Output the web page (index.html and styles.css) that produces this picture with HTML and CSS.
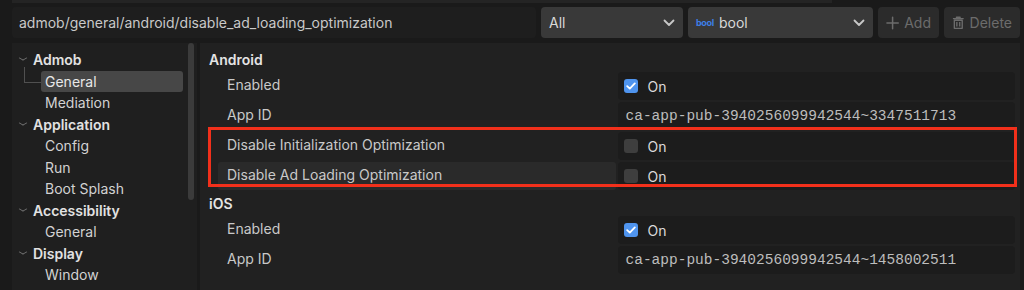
FILE: index.html
```html
<!DOCTYPE html>
<html lang="en">
<head>
    <meta charset="UTF-8">
    <title>Project Settings</title>
    <link rel="stylesheet" href="styles.css">
</head>
<body>
    <div class="top-edge"></div>
    <div class="window">
        <div class="toolbar">
            <div class="search">admob/general/android/disable_ad_loading_optimization</div>
            <div class="select select-all">
                <span class="select-text">All</span>
                <svg class="chevron" width="12" height="8" viewBox="0 0 12 8"><path d="M1.5 1.5 L6 6 L10.5 1.5" fill="none" stroke="#c8c8c8" stroke-width="1.8" stroke-linecap="round" stroke-linejoin="round"/></svg>
            </div>
            <div class="select select-type">
                <span class="type-badge">bool</span>
                <span class="select-text">bool</span>
                <svg class="chevron" width="12" height="8" viewBox="0 0 12 8"><path d="M1.5 1.5 L6 6 L10.5 1.5" fill="none" stroke="#c8c8c8" stroke-width="1.8" stroke-linecap="round" stroke-linejoin="round"/></svg>
            </div>
            <div class="btn btn-add">
                <svg width="14" height="14" viewBox="0 0 14 14"><path d="M7 1 V13 M1 7 H13" stroke="#6c6c6c" stroke-width="1.6" stroke-linecap="round"/></svg>
                <span>Add</span>
            </div>
            <div class="btn btn-delete">
                <svg width="14" height="15" viewBox="0 0 14 15"><path d="M1 3.2 H13 M5 3 V1.6 H9 V3 M2.6 5 H11.4 V14 H2.6 Z M5.4 7 V12 M8.6 7 V12" fill="none" stroke="#6c6c6c" stroke-width="1.5" stroke-linejoin="round"/></svg>
                <span>Delete</span>
            </div>
        </div>

        <div class="content">
            <div class="tree">
                <div class="tree-group">
                    <div class="tree-cat"><span class="caret"></span>Admob</div>
                    <div class="tree-item selected">General</div>
                    <div class="tree-item">Mediation</div>
                </div>
                <div class="tree-group">
                    <div class="tree-cat"><span class="caret"></span>Application</div>
                    <div class="tree-item">Config</div>
                    <div class="tree-item">Run</div>
                    <div class="tree-item">Boot Splash</div>
                </div>
                <div class="tree-group">
                    <div class="tree-cat"><span class="caret"></span>Accessibility</div>
                    <div class="tree-item">General</div>
                </div>
                <div class="tree-group">
                    <div class="tree-cat"><span class="caret"></span>Display</div>
                    <div class="tree-item">Window</div>
                </div>
                <div class="scroll-thumb"></div>
            </div>

            <div class="inspector">
                <div class="section-title">Android</div>
                <div class="prop">
                    <div class="prop-label">Enabled</div>
                    <div class="prop-value">
                        <span class="check checked"><svg width="10" height="8" viewBox="0 0 10 8"><path d="M1.2 4.2 L3.8 6.6 L8.8 1.4" fill="none" stroke="#fff" stroke-width="1.8" stroke-linecap="round" stroke-linejoin="round"/></svg></span>
                        <span class="check-text">On</span>
                    </div>
                </div>
                <div class="prop">
                    <div class="prop-label">App ID</div>
                    <div class="prop-value mono">ca-app-pub-3940256099942544~3347511713</div>
                </div>
                <div class="prop">
                    <div class="prop-label">Disable Initialization Optimization</div>
                    <div class="prop-value">
                        <span class="check"></span>
                        <span class="check-text">On</span>
                    </div>
                </div>
                <div class="prop hovered">
                    <div class="prop-label">Disable Ad Loading Optimization</div>
                    <div class="prop-value">
                        <span class="check"></span>
                        <span class="check-text">On</span>
                    </div>
                </div>

                <div class="section-title">iOS</div>
                <div class="prop">
                    <div class="prop-label">Enabled</div>
                    <div class="prop-value">
                        <span class="check checked"><svg width="10" height="8" viewBox="0 0 10 8"><path d="M1.2 4.2 L3.8 6.6 L8.8 1.4" fill="none" stroke="#fff" stroke-width="1.8" stroke-linecap="round" stroke-linejoin="round"/></svg></span>
                        <span class="check-text">On</span>
                    </div>
                </div>
                <div class="prop">
                    <div class="prop-label">App ID</div>
                    <div class="prop-value mono">ca-app-pub-3940256099942544~1458002511</div>
                </div>

                <!-- annotation box -->
                <div class="highlight-box"></div>
            </div>
        </div>
    </div>
</body>
</html>
```

FILE: styles.css
```css
* {
    margin: 0;
    padding: 0;
    box-sizing: border-box;
}

body {
    font-family: 'Inter', 'Noto Sans', sans-serif;
    font-size: 14px;
    background: #1a1a1a;
    color: #cfcfcf;
    width: 1024px;
    height: 290px;
    overflow: hidden;
    position: relative;
}

.top-edge {
    position: absolute;
    left: 12px;
    top: 0;
    width: 820px;
    height: 3px;
    background: #242424;
}

.window {
    padding: 7px 4px 0 12px;
}

.toolbar {
    display: flex;
    height: 31px;
    gap: 5px;
}

.search {
    width: 524px;
    background: #1e1e1e;
    border-radius: 4px;
    padding-left: 7px;
    display: flex;
    align-items: center;
    color: #c9c9c9;
}

.select {
    background: #393939;
    border-radius: 4px;
    display: flex;
    align-items: center;
    padding: 0 8px;
    color: #d8d8d8;
}

.select-all {
    width: 142px;
}

.select-type {
    width: 185px;
}

.select-text {
    flex: 1;
}

.type-badge {
    color: #3d7fe8;
    font-size: 9px;
    font-weight: 700;
    letter-spacing: -0.3px;
    margin-right: 5px;
}

.btn {
    background: #2b2b2b;
    border-radius: 4px;
    display: flex;
    align-items: center;
    gap: 5px;
    padding: 0 8px;
    color: #6c6c6c;
}

.btn-add {
    width: 61px;
}

.btn-delete {
    width: 76px;
}

.content {
    display: flex;
    margin-top: 5px;
    height: 247px;
    gap: 3px;
}

.tree {
    width: 185px;
    background: #1f1f1f;
    padding-top: 6px;
    position: relative;
}

.tree-cat {
    height: 21.5px;
    display: flex;
    align-items: center;
    padding-left: 8px;
    font-weight: 600;
    color: #e2e2e2;
}

.caret {
    width: 6px;
    height: 6px;
    border-right: 1.3px solid #777;
    border-bottom: 1.3px solid #777;
    transform: scale(1, 0.6) rotate(45deg);
    margin: -3px 7px 0 0;
}

.tree-item {
    height: 21.5px;
    display: flex;
    align-items: center;
    margin-left: 29px;
    width: 142px;
    padding-left: 4px;
    color: #d2d2d2;
    border-radius: 3px;
}

.tree-item.selected {
    background: #474747;
    position: relative;
    color: #e8e8e8;
}

.tree-item.selected::before {
    content: '';
    position: absolute;
    left: -17px;
    top: -4px;
    width: 16px;
    height: 15px;
    border-left: 1px solid #505050;
    border-bottom: 1px solid #505050;
}

.scroll-thumb {
    position: absolute;
    right: 3px;
    top: 0;
    width: 6px;
    height: 157px;
    background: #3b3b3b;
    border-radius: 3px;
}

.inspector {
    flex: 1;
    background: #212121;
    padding: 4px 5px 0 8px;
    position: relative;
}

.section-title {
    height: 24px;
    display: flex;
    align-items: center;
    padding-left: 1px;
    font-weight: 600;
    color: #e4e4e4;
}

.prop {
    display: grid;
    grid-template-columns: 1fr 1fr;
    gap: 2px;
    margin-left: 10px;
    height: 30px;
    align-items: center;
}

.prop-label {
    padding: 0 0 3px 9px;
    height: 28px;
    display: flex;
    align-items: center;
    color: #c9c9c9;
    border-radius: 3px;
}

.prop.hovered .prop-label {
    background: #2a2a2a;
}

.prop-value {
    height: 28px;
    background: #1c1c1c;
    border-radius: 4px;
    display: flex;
    align-items: center;
    padding-left: 6px;
}

.mono {
    font-family: 'Liberation Mono', monospace;
    font-size: 14.5px;
    color: #bdbdbd;
    padding-left: 8px;
}

.check {
    width: 14px;
    height: 14px;
    border-radius: 3px;
    background: #3e3e3e;
    display: flex;
    align-items: center;
    justify-content: center;
}

.check.checked {
    background: #4f94ee;
}

.check-text {
    margin-left: 10px;
    color: #dadada;
}

.highlight-box {
    position: absolute;
    left: 8px;
    top: 84px;
    width: 809px;
    height: 60px;
    border: 3px solid #f2301b;
}
```
